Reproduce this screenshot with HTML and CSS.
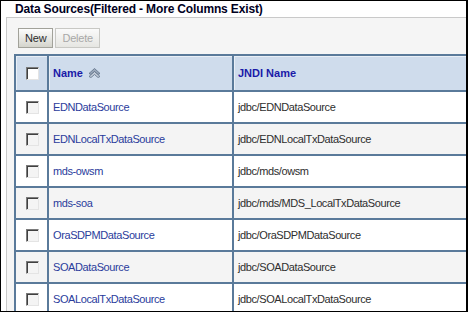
FILE: index.html
```html
<!DOCTYPE html>
<html lang="en">
<head>
  <meta charset="UTF-8">
  <meta name="viewport" content="width=device-width, initial-scale=1.0">
  <title>Data Sources</title>
  <link rel="stylesheet" href="styles.css">
</head>
<body>

  <div class="frame">
    <h1 class="title">Data Sources(Filtered - More Columns Exist)</h1>

    <div class="panel">
      <div class="toolbar">
        <button class="btn">New</button>
        <button class="btn" disabled>Delete</button>
      </div>

      <table class="grid">
        <colgroup>
          <col class="col-check">
          <col class="col-name">
          <col class="col-jndi">
        </colgroup>
        <thead>
          <tr>
            <th class="check-cell"><span class="checkbox checkbox-head"></span></th>
            <th>Name
              <svg class="sort-icon" width="13" height="10" viewBox="0 0 13 10">
                <path d="M1 5.5 L6.5 0.5 L12 5.5 L10 6.5 L6.5 3.5 L3 6.5 Z" fill="#9aa8ba" stroke="#5d6f86" stroke-width="0.8" stroke-linejoin="round"/>
                <path d="M1 8.5 L6.5 3.5 L12 8.5 L10 9.5 L6.5 6.5 L3 9.5 Z" fill="#c3ccd8" stroke="#5d6f86" stroke-width="0.8" stroke-linejoin="round"/>
              </svg>
            </th>
            <th>JNDI Name</th>
          </tr>
        </thead>
        <tbody>
          <tr>
            <td class="check-cell"><span class="checkbox"></span></td>
            <td><a href="#">EDNDataSource</a></td>
            <td>jdbc/EDNDataSource</td>
          </tr>
          <tr>
            <td class="check-cell"><span class="checkbox"></span></td>
            <td><a href="#">EDNLocalTxDataSource</a></td>
            <td>jdbc/EDNLocalTxDataSource</td>
          </tr>
          <tr>
            <td class="check-cell"><span class="checkbox"></span></td>
            <td><a href="#">mds-owsm</a></td>
            <td>jdbc/mds/owsm</td>
          </tr>
          <tr>
            <td class="check-cell"><span class="checkbox"></span></td>
            <td><a href="#">mds-soa</a></td>
            <td>jdbc/mds/MDS_LocalTxDataSource</td>
          </tr>
          <tr>
            <td class="check-cell"><span class="checkbox"></span></td>
            <td><a href="#">OraSDPMDataSource</a></td>
            <td>jdbc/OraSDPMDataSource</td>
          </tr>
          <tr>
            <td class="check-cell"><span class="checkbox"></span></td>
            <td><a href="#">SOADataSource</a></td>
            <td>jdbc/SOADataSource</td>
          </tr>
          <tr>
            <td class="check-cell"><span class="checkbox"></span></td>
            <td><a href="#">SOALocalTxDataSource</a></td>
            <td>jdbc/SOALocalTxDataSource</td>
          </tr>
        </tbody>
      </table>
    </div>
  </div>

</body>
</html>
```

FILE: styles.css
```css
body {
  margin: 0;
  font-family: "Liberation Sans", Arial, sans-serif;
  background-color: #ffffff;
}

.frame {
  width: 468px;
  height: 312px;
  box-sizing: border-box;
  border: 1px solid #000000;
  border-right-width: 2px;
  overflow: hidden;
  background-color: #ffffff;
}

.title {
  margin: 0;
  height: 16px;
  padding-left: 14px;
  font-size: 12px;
  line-height: 16px;
  font-weight: bold;
  letter-spacing: -0.15px;
  color: #000022;
  white-space: nowrap;
}

.panel {
  width: 600px;
  margin-left: 5px;
  height: 300px;
  border-top: 1px solid #c9c9c9;
  border-left: 1px solid #c9c9c9;
  background-color: #f5f5f5;
  padding: 10px 0 0 7px;
}

.toolbar {
  display: flex;
  gap: 2px;
  margin-left: 4px;
  margin-bottom: 6px;
}

.btn {
  height: 20px;
  padding: 0 6px;
  font-family: "Liberation Sans", Arial, sans-serif;
  font-size: 11px;
  letter-spacing: -0.2px;
  color: #2b2b2b;
  background: linear-gradient(#fdfdfd, #d4d4cc);
  border: 1px solid #a2a29a;
  border-radius: 0;
}

.btn:disabled {
  color: #a8a8a8;
  background: linear-gradient(#fafafa, #e6e6e2);
  border-color: #c8c8c4;
}

.grid {
  width: 560px;
  min-width: 560px;
  table-layout: fixed;
  border-collapse: separate;
  border-spacing: 0;
  border-top: 2px solid #5a7a9a;
  border-left: 2px solid #5a7a9a;
  font-size: 11px;
  letter-spacing: -0.4px;
}

.col-check {
  width: 33px;
}

.col-name {
  width: 185px;
}

.grid th,
.grid td {
  box-sizing: border-box;
  border-right: 2px solid #5a7a9a;
  border-bottom: 2px solid #5a7a9a;
  padding: 0 0 0 4px;
  text-align: left;
  white-space: nowrap;
}

.grid th {
  height: 36px;
  background-color: #cfdcec;
  box-shadow: inset 1px 1px 0 #e9eff6;
  color: #1a1aa8;
  font-weight: bold;
  letter-spacing: 0;
}

.grid td {
  height: 32px;
  color: #2e2e2e;
}

.grid tbody tr:nth-child(even) td {
  background-color: #f4f4f4;
}

.grid tbody tr:nth-child(odd) td {
  background-color: #ffffff;
}

.grid a {
  color: #2a3c9c;
  text-decoration: none;
}

.grid .check-cell {
  padding: 0 0 0 10px;
}

.sort-icon {
  vertical-align: -1px;
  margin-left: 2px;
}

.checkbox {
  display: block;
  width: 13px;
  height: 13px;
  box-sizing: border-box;
  border: 1px solid;
  border-color: #7b7b7b #e4e4e4 #e4e4e4 #7b7b7b;
  box-shadow: inset 1px 1px 0 #404040;
  background-color: #f4f4f4;
}

.checkbox-head {
  background-color: #ffffff;
}
```
